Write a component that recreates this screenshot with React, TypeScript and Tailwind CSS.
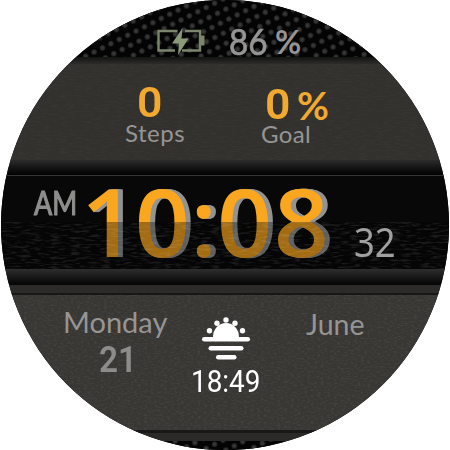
import type { ReactNode } from 'react';

const round = "font-['Lato',sans-serif] text-[#969594]";

function Texture({ id, freq, opacity }: { id: string; freq: string; opacity: number }) {
  return (
    <svg className="pointer-events-none absolute inset-0 h-full w-full" opacity={opacity}>
      <filter id={id} x="0" y="0" width="100%" height="100%" colorInterpolationFilters="sRGB">
        <feTurbulence type="fractalNoise" baseFrequency={freq} numOctaves="2" seed="8" />
        <feColorMatrix values="0 0 0 0 1 0 0 0 0 1 0 0 0 0 1 3.5 0 0 0 -1.6" />
      </filter>
      <rect width="100%" height="100%" filter={`url(#${id})`} />
    </svg>
  );
}

function Mesh({ id, h }: { id: string; h: number }) {
  const dots: { x: number; y: number }[] = [];
  for (let i = -10; i < 70; i++) {
    for (let j = -10; j < 40; j++) {
      const x = 3 + i * 8.4 + j * 2.9;
      const y = 6 - i * 4.2 + j * 10;
      if (x > 60 && x < 390 && y > -4 && y < h + 4) dots.push({ x, y });
    }
  }
  return (
    <svg className="absolute inset-0 w-full" height={h}>
      <defs>
        <radialGradient id={id} cx="0.45" cy="0.45">
          <stop offset="0" stopColor="#3e3e3e" />
          <stop offset="0.55" stopColor="#2b2b2b" />
          <stop offset="1" stopColor="#040404" />
        </radialGradient>
      </defs>
      <rect width="100%" height="100%" fill="#040404" />
      {dots.map((d, k) => (
        <circle key={k} cx={d.x} cy={d.y} r="3.5" fill={`url(#${id})`} />
      ))}
    </svg>
  );
}

function Column({ className, children }: { className: string; children: ReactNode }) {
  return <div className={`flex flex-col whitespace-nowrap ${className}`}>{children}</div>;
}

export default function App() {
  return (
    <div className="h-[450px] w-[450px] overflow-hidden bg-white px-px">
      <div className="flex h-[450px] w-[448px] flex-col overflow-hidden rounded-[50%] bg-[#050505]">
        <header className="relative h-[57px] shrink-0">
          <Mesh id="mesh-top" h={57} />
          <div className="relative flex items-start pl-[156px] pt-[28px]">
            <svg width="48" height="28" viewBox="0 0 48 28" className="shrink-0">
              <path d="M20.500 3H1.500v19.500H18M25 22.500h18V3H28" fill="none" stroke="#7b866c" strokeWidth="2.400" />
              <path d="M43 7.500h4.500v10H43z" fill="#7b866c" />
              <path d="M25.500 0 15 15.500h7L21 27 31.500 10.500h-7z" fill="#8a9a79" />
            </svg>
            <span className={`${round} ml-[24px] mt-[-4px] w-[39px] origin-left scale-x-[.9] text-[37px] leading-[34px] [-webkit-text-stroke:.7px_#969594]`}>86</span>
            <span className={`${round} ml-[7px] mt-[-3px] text-[32px] font-bold leading-[34px]`}>%</span>
          </div>
        </header>
        <div className="h-[7px] shrink-0 bg-gradient-to-b from-[#131313] to-[#2d2c2a]" />
        <section className="relative flex h-[96px] shrink-0 bg-[#33312e]">
          <Texture id="tex-a" freq="0.12 0.8" opacity={0.025} />
          <Column className="relative ml-[124px] w-[80px] pt-[23px]">
            <span className="ml-[12px] w-[30px] origin-left scale-x-[1.06] font-['Roboto',sans-serif] text-[42px] font-semibold leading-[32px] text-[#f2a930]">0</span>
            <span className={`${round} mt-[2px] text-[24px] leading-[24px] tracking-[.5px]`}>Steps</span>
          </Column>
          <Column className="relative ml-[56px] w-[94px] pt-[25px]">
            <div className="flex items-start text-[#f2a930]">
              <span className="ml-[4px] w-[30px] origin-left scale-x-[1.06] font-['Roboto',sans-serif] text-[42px] font-semibold leading-[32px]">0</span>
              <span className="ml-[2px] font-['Lato',sans-serif] text-[39px] font-bold leading-[32px]">%</span>
            </div>
            <span className={`${round} mt-[1px] text-[24px] leading-[24px] tracking-[.4px]`}>Goal</span>
          </Column>
        </section>
        <div className="h-[15px] shrink-0 bg-gradient-to-b from-[#2c2c2c] to-[#030303]" />
        <main className="relative h-[94px] shrink-0 border-t border-[#353432] bg-[#080808]">
          <div className="flex items-start whitespace-nowrap">
            <span className="ml-[33px] mt-[10px] w-[52px] origin-left scale-x-[.84] font-['Lato',sans-serif] text-[32px] leading-[34px] text-[#8e8e8d] [-webkit-text-stroke:1.2px_#8e8e8d]">AM</span>
            <span className="ml-[-5px] mt-[-9px] flex origin-left scale-x-[1.015] font-['Open_Sans',sans-serif] text-[95px] font-semibold leading-[106px] text-[#faa61e] [text-shadow:1px_0_#929394,2px_0_#929394,3px_0_#929394,4px_0_#929394,5px_0_#929394]">
              <span className="w-[53px]">1</span>
              <span className="w-[55px]">0</span>
              <span className="w-[26px]">:</span>
              <span className="w-[56px]">0</span>
              <span className="w-[56px]">8</span>
            </span>
          </div>
          <div className="absolute inset-x-0 bottom-0 h-[47px] overflow-hidden bg-black/35">
            <Texture id="tex-b" freq="0.1 0.45" opacity={0.09} />
          </div>
          <span className="absolute left-[353px] top-[44px] origin-left scale-x-[.91] font-['Noto_Sans',sans-serif] text-[40px] leading-[44px] text-[#a0a0a0]">32</span>
        </main>
        <div className="h-[16px] shrink-0 bg-gradient-to-b from-[#2e2e2e] to-[#050505]" />
        <div className="h-[10px] shrink-0 border-b-2 border-[#181716] bg-[#2d2b29]" />
        <section className="relative flex h-[135px] shrink-0 bg-[#383734]">
          <Texture id="tex-c" freq="0.3 0.6" opacity={0.05} />
          <Column className="relative ml-[62px] w-[110px] pt-[10px]">
            <span className={`${round} text-[29px] leading-[34px]`}>Monday</span>
            <span className="ml-[36px] mt-[4px] w-[60px] origin-left scale-x-[.9] font-['Roboto',sans-serif] text-[37px] font-semibold leading-[34px] text-[#8d8c8b]">21</span>
          </Column>
          <Column className="relative ml-[28px] w-[86px] pt-[22px]">
            <svg width="50" height="44" viewBox="0 0 50 44" fill="#fff">
              <path d="M12 20a13 14 0 0 1 26 0z" />
              <rect x="1" y="20" width="48" height="4.500" rx="2.200" />
              <rect x="7.500" y="29" width="35" height="4.500" rx="2.200" />
              <rect x="15" y="38" width="20.500" height="4.500" rx="2.200" />
              <circle cx="8.500" cy="13.700" r="2.700" /><circle cx="16" cy="6.300" r="2.700" />
              <circle cx="25" cy="3" r="2.700" /><circle cx="34" cy="6.300" r="2.700" /><circle cx="41.500" cy="13.700" r="2.700" />
            </svg>
            <span className="ml-[-10px] mt-[4px] origin-left scale-x-[.9] font-['Roboto',sans-serif] text-[31px] leading-[34px] text-white">18:49</span>
          </Column>
          <Column className="relative ml-[19px] w-[80px] pt-[12px]">
            <span className={`${round} text-[28.500px] leading-[34px]`}>June</span>
          </Column>
        </section>
        <div className="h-[11px] shrink-0 border-t-[3px] border-[#191817] bg-[#2b2a28]" />
        <footer className="relative h-[9px] shrink-0"><Mesh id="mesh-bottom" h={9} /></footer>
      </div>
    </div>
  );
}
